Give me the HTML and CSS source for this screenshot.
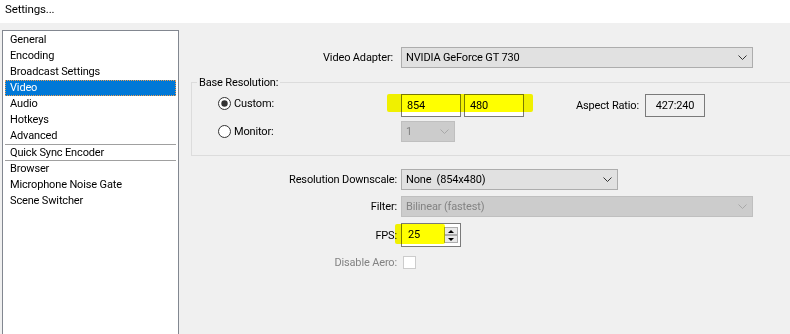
FILE: index.html
```html
<!DOCTYPE html>
<html>
<head>
<meta charset="utf-8">
<link rel="stylesheet" href="styles.css">
</head>
<body>
<div class="titlebar">Settings...</div>
<div class="main">
  <ul class="nav">
    <li>General</li>
    <li>Encoding</li>
    <li>Broadcast Settings</li>
    <li class="sel">Video</li>
    <li>Audio</li>
    <li>Hotkeys</li>
    <li>Advanced</li>
    <li class="grp">Quick Sync Encoder</li>
    <li>Browser</li>
    <li>Microphone Noise Gate</li>
    <li>Scene Switcher</li>
  </ul>
  <div class="panel">
    <div class="row">
      <span class="lbl lbl-adapter">Video Adapter:</span>
      <div class="combo wide"><span>NVIDIA GeForce GT 730</span><svg class="chev" width="9" height="5" viewBox="0 0 9 5"><path d="M0.5 0.5 L4.5 4.5 L8.5 0.5"/></svg></div>
    </div>
    <div class="group">
      <span class="legend">Base Resolution:</span>
      <div class="row grow">
        <span class="opt opt-top"><svg width="13" height="13" viewBox="0 0 13 13"><circle cx="6.5" cy="6.5" r="6" fill="#fff" stroke="#333"/><circle cx="6.5" cy="6.5" r="3.2" fill="#333"/></svg><span>Custom:</span></span>
        <div class="tb">854</div>
        <div class="tb tb2">480</div>
        <span class="ar-lbl">Aspect Ratio:</span>
        <div class="ar">427:240</div>
      </div>
      <div class="row grow grow2">
        <span class="opt"><svg width="13" height="13" viewBox="0 0 13 13"><circle cx="6.5" cy="6.5" r="6" fill="#fff" stroke="#333"/></svg><span>Monitor:</span></span>
        <div class="combo small dis"><span>1</span><svg class="chev" width="9" height="5" viewBox="0 0 9 5"><path d="M0.5 0.5 L4.5 4.5 L8.5 0.5"/></svg></div>
      </div>
    </div>
    <div class="row r-down">
      <span class="lbl">Resolution Downscale:</span>
      <div class="combo mid"><span class="pre">None  (854x480)</span><svg class="chev" width="9" height="5" viewBox="0 0 9 5"><path d="M0.5 0.5 L4.5 4.5 L8.5 0.5"/></svg></div>
    </div>
    <div class="row r-filter">
      <span class="lbl">Filter:</span>
      <div class="combo wide dis"><span>Bilinear (fastest)</span><svg class="chev" width="9" height="5" viewBox="0 0 9 5"><path d="M0.5 0.5 L4.5 4.5 L8.5 0.5"/></svg></div>
    </div>
    <div class="row r-fps">
      <span class="lbl">FPS:</span>
      <div class="spin">
        <span class="val">25</span>
        <span class="btns"><span class="sb"><i class="up"></i></span><span class="sb"><i class="dn"></i></span></span>
      </div>
    </div>
    <div class="row r-aero">
      <span class="lbl gray">Disable Aero:</span>
      <span class="chk"></span>
    </div>
    <div class="hl hl-res"></div>
    <div class="hl hl-fps"></div>
  </div>
</div>
</body>
</html>
```
FILE: styles.css
```css
* { box-sizing: border-box; }
html, body { margin: 0; padding: 0; }
body {
  width: 790px;
  height: 334px;
  overflow: hidden;
  background: #f0f0f0;
  font-family: Roboto, "Noto Sans", sans-serif;
  font-size: 11px;
  letter-spacing: -0.15px;
  color: #000;
}
.titlebar {
  height: 23px;
  background: #fff;
  padding-left: 5px;
  line-height: 18px;
  font-size: 11.5px;
}
.main { display: flex; align-items: flex-start; }
.nav {
  list-style: none;
  margin: 7px 0 0 2px;
  padding: 1px;
  width: 177px;
  height: 320px;
  flex: none;
  background: #fff;
  border: 1px solid #828790;
}
.nav li {
  height: 16px;
  line-height: 16px;
  padding-left: 5px;
  margin: 0 1px;
  white-space: nowrap;
}
.nav li.sel {
  background: #0078d7;
  color: #fff;
  outline: 1px dotted #f0a050;
  outline-offset: -1px;
}
.nav li.grp {
  height: 17px;
  line-height: 15px;
  border-top: 1px solid #a0a0a0;
  border-bottom: 1px solid #a0a0a0;
}
.panel {
  position: relative;
  flex: 1;
  min-width: 0;
  margin-left: 12px;
  padding-top: 24px;
}
.row { display: flex; align-items: center; }
.lbl {
  width: 210px;
  flex: none;
  text-align: right;
  padding-right: 4px;
  white-space: nowrap;
}
.lbl-adapter { padding-right: 8px; }
.gray { color: #838383; }
.combo {
  height: 21px;
  border: 1px solid #adadad;
  background: #e1e1e1;
  display: flex;
  align-items: center;
  justify-content: space-between;
  padding: 0 5px 0 4px;
  flex: none;
}
.combo .chev path { fill: none; stroke: #333; stroke-width: 1; }
.combo.dis { background: #cccccc; border-color: #bfbfbf; color: #838383; }
.combo.dis .chev path { stroke: #a8a8a8; }
.combo.wide { width: 352px; }
.combo.mid { width: 217px; }
.combo.small { width: 54px; }
.pre { white-space: pre; }
.group {
  margin: 14px -20px 0 0;
  border: 1px solid #dcdcdc;
  padding: 0 0 13px 26px;
}
.legend {
  display: block;
  width: max-content;
  margin: -8px 0 0 -21px;
  padding: 0 2px;
  background: #f0f0f0;
  line-height: 16px;
}
.grow { margin-top: 3px; height: 23px; }
.grow2 { margin-top: 4px; height: 21px; }
.opt {
  width: 183px;
  flex: none;
  display: flex;
  align-items: center;
  gap: 3px;
}
.opt-top { align-self: flex-start; margin-top: 3px; height: 13px; }
.opt svg { flex: none; }
.tb {
  width: 60px;
  height: 23px;
  border: 1px solid #7a7a7a;
  background: #fff;
  padding-left: 5px;
  line-height: 21px;
  flex: none;
}
.tb2 { margin-left: 3px; }
.ar-lbl { margin-left: 52px; white-space: nowrap; }
.ar {
  margin-left: 6px;
  width: 60px;
  height: 23px;
  border: 1px solid #7a7a7a;
  background: #f0f0f0;
  text-align: center;
  line-height: 21px;
  flex: none;
}
.r-down { margin-top: 13px; }
.r-filter { margin-top: 6px; }
.r-fps { margin-top: 6px; }
.spin {
  width: 60px;
  height: 24px;
  border: 1px solid #7a7a7a;
  background: #fff;
  display: flex;
  flex: none;
}
.spin .val { flex: 1; padding-left: 6px; line-height: 22px; }
.spin .btns {
  display: flex;
  flex-direction: column;
  padding: 3px 2px 3px 0;
}
.sb {
  width: 14px;
  height: 8px;
  border: 1px solid #adadad;
  background: #e8e8e8;
  display: flex;
  align-items: center;
  justify-content: center;
}
.sb i { display: block; width: 0; height: 0; border-left: 3px solid transparent; border-right: 3px solid transparent; }
.sb i.up { border-bottom: 3px solid #000; }
.sb i.dn { border-top: 3px solid #000; }
.r-aero { margin-top: 9px; height: 13px; }
.chk {
  margin-left: 2px;
  width: 13px;
  height: 13px;
  border: 1px solid #cccccc;
  background: #fff;
}
.hl {
  position: absolute;
  background: #ffff00;
  mix-blend-mode: multiply;
  border-radius: 2px;
}
.hl-res { left: 196px; top: 71px; width: 146px; height: 18px; }
.hl-fps { left: 204px; top: 201px; width: 50px; height: 20px; }
```
